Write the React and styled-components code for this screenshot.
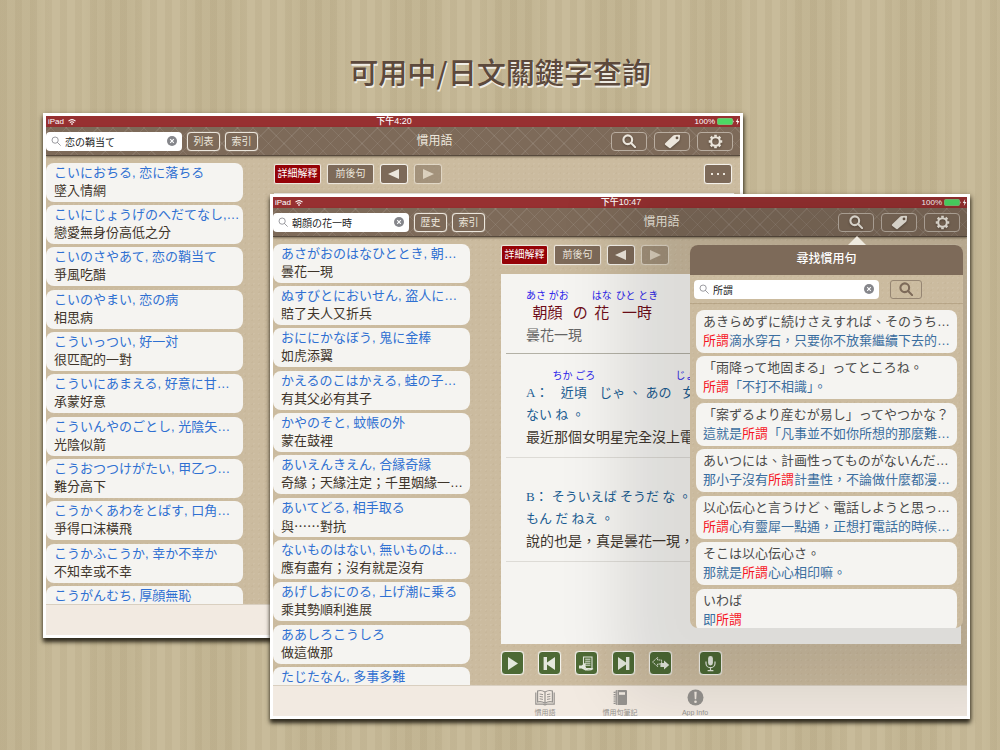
import React, { useState } from 'react';
import styled, { createGlobalStyle, css } from 'styled-components';

const brown = '#7d6a59';
const cream = '#ece6dc';
const paper = '#f5f4f1';
const green = '#4d6a35';

const cjk = `'Liberation Sans', 'Noto Sans CJK TC', 'Noto Sans CJK JP', sans-serif`;
const fullWidth = `'Noto Sans CJK TC', 'Noto Sans CJK JP', sans-serif`;
const serif = `'Liberation Serif', 'Noto Sans CJK TC', serif`;

const koiList = [
	{ ja: 'こいにおちる, 恋に落ちる', zh: '墜入情網' },
	{ ja: 'こいにじょうげのへだてなし,…', zh: '戀愛無身份高低之分' },
	{ ja: 'こいのさやあて, 恋の鞘当て', zh: '爭風吃醋' },
	{ ja: 'こいのやまい, 恋の病', zh: '相思病' },
	{ ja: 'こういっつい, 好一対', zh: '很匹配的一對' },
	{ ja: 'こういにあまえる, 好意に甘…', zh: '承蒙好意' },
	{ ja: 'こういんやのごとし, 光陰矢…', zh: '光陰似箭' },
	{ ja: 'こうおつつけがたい, 甲乙つ…', zh: '難分高下' },
	{ ja: 'こうかくあわをとばす, 口角…', zh: '爭得口沫橫飛' },
	{ ja: 'こうかふこうか, 幸か不幸か', zh: '不知幸或不幸' },
	{ ja: 'こうがんむち, 厚顔無恥', zh: '' }
];

const asagaoList = [
	{ ja: 'あさがおのはなひととき, 朝…', zh: '曇花一現' },
	{ ja: 'ぬすびとにおいせん, 盗人に…', zh: '賠了夫人又折兵' },
	{ ja: 'おににかなぼう, 鬼に金棒', zh: '如虎添翼' },
	{ ja: 'かえるのこはかえる, 蛙の子…', zh: '有其父必有其子' },
	{ ja: 'かやのそと, 蚊帳の外', zh: '蒙在鼓裡' },
	{ ja: 'あいえんきえん, 合縁奇縁', zh: '奇緣；天緣注定；千里姻緣一…' },
	{ ja: 'あいてどる, 相手取る', zh: '與……對抗', wide: true },
	{ ja: 'ないものはない, 無いものは…', zh: '應有盡有；沒有就是沒有' },
	{ ja: 'あげしおにのる, 上げ潮に乗る', zh: '乘其勢順利進展' },
	{ ja: 'ああしろこうしろ', zh: '做這做那' },
	{ ja: 'たじたなん, 多事多難', zh: '' }
];

const keyword = '所謂';

const results = [
	{ ja: 'あきらめずに続けさえすれば、そのうち…', zh: '所謂滴水穿石，只要你不放棄繼續下去的…' },
	{ ja: '「雨降って地固まる」ってところね。', zh: '所謂「不打不相識」。' },
	{ ja: '「案ずるより産むが易し」ってやつかな？', zh: '這就是所謂「凡事並不如你所想的那麼難…' },
	{ ja: 'あいつには、計画性ってものがないんだ…', zh: '那小子沒有所謂計畫性，不論做什麼都漫…' },
	{ ja: '以心伝心と言うけど、電話しようと思っ…', zh: '所謂心有靈犀一點通，正想打電話的時候…' },
	{ ja: 'そこは以心伝心さ。', zh: '那就是所謂心心相印嘛。' },
	{ ja: 'いわば', zh: '即所謂' }
];

const SearchIcon = ({ size = 14, weight = 2.4 }) => (
	<svg width={size} height={size} viewBox='0 0 16 16' fill='none' stroke='currentColor' strokeWidth={weight}>
		<circle cx='6.6' cy='6.6' r='5' />
		<path d='M10.4 10.4 15 15' strokeLinecap='round' />
	</svg>
);

const TagIcon = () => (
	<svg width='17' height='15' viewBox='0 0 17 15' fill='currentColor' fillRule='evenodd'>
		<path d='M1.2 9.2 9 1.8Q9.8 1.1 10.8 1L15 .7Q16.2.7 16.1 1.9L15.7 5.4Q15.6 6.3 14.9 7L6.6 13.9Q5.7 14.5 5 13.7L1.1 10.7Q.4 10 1.2 9.2ZM13 2.5a1.4 1.4 0 1 0 0 2.8 1.4 1.4 0 0 0 0-2.8Z' />
	</svg>
);

const GearIcon = () => (
	<svg width='15' height='15' viewBox='0 0 16 16' fill='none' stroke='currentColor'>
		<circle cx='8' cy='8' r='4.6' strokeWidth='2.2' />
		<path
			d='M8 .8V3M8 13v2.2M.8 8H3M13 8h2.2M2.9 2.9 4.5 4.5M11.5 11.5l1.6 1.6M13.1 2.9 11.5 4.5M4.5 11.5 2.9 13.1'
			strokeWidth='2.8'
		/>
	</svg>
);

const WifiIcon = () => (
	<svg width='8' height='6' viewBox='0 0 16 12' fill='none' stroke='currentColor' strokeWidth='2.2'>
		<path d='M1 4.2Q8-1.6 15 4.2M3.8 7.2Q8 3.8 12.2 7.2' />
		<path d='M8 8 10.2 9.8 8 12 5.8 9.8Z' fill='currentColor' stroke='none' />
	</svg>
);

const BatteryIcon = () => (
	<svg width='23' height='7' viewBox='0 0 23 7'>
		<rect x='.5' y='.5' width='15' height='6' rx='1' fill='#4cd964' stroke='#7fe08e' strokeWidth='.6' />
		<path d='M16.2 2.2Q17.4 3.5 16.2 4.8Z' fill='#fff' />
		<path d='M21.2 0 18.8 3.9H20.4L19.8 7 22.4 2.9H20.7Z' fill='#fff' />
	</svg>
);

const ClearIcon = () => (
	<svg width='10' height='10' viewBox='0 0 10 10'>
		<circle cx='5' cy='5' r='5' fill='#85868b' />
		<path d='M3.2 3.2 6.8 6.8M6.8 3.2 3.2 6.8' stroke='#fff' strokeWidth='1.1' />
	</svg>
);

const ArrowIcon = ({ flip }) => (
	<svg width='12' height='10' viewBox='0 0 12 10' fill='currentColor'>
		<path d={flip ? 'M1 0V10L12 5Z' : 'M11 0V10L0 5Z'} />
	</svg>
);

const PlayIcon = () => (
	<svg width='19' height='19' viewBox='0 0 19 19' fill='currentColor'>
		<path d='M5 3V16L15 9.5Z' />
	</svg>
);

const SkipIcon = ({ forward }) => (
	<svg width='19' height='19' viewBox='0 0 19 19' fill='currentColor'>
		{forward ? (
			<path d='M4 3V16L12 10.5V16H15.4V3H12V8.5Z' />
		) : (
			<path d='M15 3V16L7 10.5V16H3.6V3H7V8.5Z' />
		)}
	</svg>
);

const ReadIcon = () => (
	<svg width='19' height='19' viewBox='0 0 19 19'>
		<path d='M6.5 3H15V14.5H9L6.5 12Z' fill='none' stroke='currentColor' strokeWidth='1.1' />
		<path d='M8.2 5.2H13.4M8.2 7.2H13.4M8.2 9.2H13.4M8.2 11.2H13.4' stroke='currentColor' />
		<path d='M2 11.5H4.6L8.6 8.4V16.6L4.6 14.4H2Z' fill='currentColor' />
		<path d='M8 15.5Q13.5 16.8 16 14.5' fill='none' stroke='currentColor' strokeWidth='1.3' />
	</svg>
);

const SwapIcon = () => (
	<svg width='19' height='19' viewBox='0 0 19 19' strokeLinejoin='round'>
		<path d='M1.6 8 6.6 3.4V6H10.6V10H6.6V12.6Z' fill='none' stroke='currentColor' strokeDasharray='1.6 .5' />
		<path d='M18.2 11 13 6.4V9H9.4V13H13V15.6Z' fill='currentColor' />
	</svg>
);

const MicIcon = () => (
	<svg width='19' height='19' viewBox='0 0 19 19'>
		<rect x='7.1' y='2' width='4.8' height='9.4' rx='2.4' fill='currentColor' />
		<path
			d='M5 7.6V9.2A4.5 4.5 0 0 0 14 9.2V7.6M9.5 13.8V16.4M6.6 16.7H12.4'
			fill='none'
			stroke='currentColor'
			strokeWidth='1.2'
		/>
	</svg>
);

const BookIcon = () => (
	<svg width='20' height='17' viewBox='0 0 20 17' fill='none' stroke='currentColor' strokeWidth='1.2'>
		<path d='M10 3Q6 .6 2.6 2V13Q6.4 12 10 14.2 13.6 12 17.4 13V2Q14 .6 10 3ZM10 3V14.2' />
		<path d='M.8 3.4V15.2H8.4Q10 16.4 11.6 15.2H19.2V3.4' />
		<path d='M4.6 5 8 5.6M4.6 7.4 8 8M4.6 9.8 8 10.4M12 5.6 15.4 5M12 8 15.4 7.4M12 10.4 15.4 9.8' strokeWidth='1' />
	</svg>
);

const NotebookIcon = () => (
	<svg width='15' height='17' viewBox='0 0 15 17'>
		<rect x='2.6' y='1' width='11.4' height='15' rx='1' fill='currentColor' />
		<path d='M.6 3.4H2.6M.6 5.6H2.6M.6 7.8H2.6M.6 10H2.6M.6 12.2H2.6M.6 14.4H2.6' stroke='currentColor' strokeWidth='1.2' />
		<rect x='6' y='3.2' width='6' height='2.6' fill='#f2eae1' />
		<path d='M4.3 1V16' stroke='#f2eae1' strokeWidth='.6' />
	</svg>
);

const InfoIcon = () => (
	<svg width='17' height='17' viewBox='0 0 17 17'>
		<circle cx='8.5' cy='8.5' r='8' fill='currentColor' />
		<path d='M7.3 2.8H9.7L9.2 10.2H7.8Z' fill='#f2eae1' />
		<circle cx='8.5' cy='12.7' r='1.3' fill='#f2eae1' />
	</svg>
);

const SearchField = ({ label, initial }) => {
	const [ value, setValue ] = useState(initial);

	return (
		<FieldBox>
			<FieldIcon>
				<SearchIcon size={10} weight={1.4} />
			</FieldIcon>
			<input type='text' aria-label={label} value={value} onChange={e => setValue(e.target.value)} />
			<ClearBtn type='button' aria-label='清除' onClick={() => setValue('')}>
				<ClearIcon />
			</ClearBtn>
		</FieldBox>
	);
};

const StatusBar = ({ time }) => (
	<Status>
		<span>
			iPad <WifiIcon />
		</span>
		<strong>{time}</strong>
		<span>
			100% <BatteryIcon />
		</span>
	</Status>
);

const NavBar = ({ query, listLabel }) => (
	<Nav>
		<NavSearch>
			<SearchField label='搜尋' initial={query} />
		</NavSearch>
		<SmallBtn type='button'>{listLabel}</SmallBtn>
		<SmallBtn type='button'>索引</SmallBtn>
		<h2>慣用語</h2>
		<NavActions>
			<NavBtn type='button' aria-label='尋找'>
				<SearchIcon />
			</NavBtn>
			<NavBtn type='button' aria-label='標籤'>
				<TagIcon />
			</NavBtn>
			<NavBtn type='button' aria-label='設定'>
				<GearIcon />
			</NavBtn>
		</NavActions>
	</Nav>
);

const IdiomList = ({ items }) => (
	<List>
		{items.map(item => (
			<ListCard key={item.ja}>
				<Reading>{item.ja}</Reading>
				<Meaning $wide={item.wide}>{item.zh}</Meaning>
			</ListCard>
		))}
	</List>
);

const DetailToolbar = () => (
	<Toolbar>
		<ModeBtn type='button' $active>
			詳細解釋
		</ModeBtn>
		<ModeBtn type='button'>前後句</ModeBtn>
		<StepBtn type='button' aria-label='上一句'>
			<ArrowIcon />
		</StepBtn>
		<StepBtn type='button' aria-label='下一句' disabled>
			<ArrowIcon flip />
		</StepBtn>
		<MoreBtn type='button' aria-label='更多'>
			<i />
			<i />
			<i />
		</MoreBtn>
	</Toolbar>
);

const Furigana = ({ base, kana, align }) => (
	<Ruby $align={align}>
		<rt>{kana}</rt>
		<span>{base}</span>
	</Ruby>
);

const Highlight = ({ text }) => {
	const [ before, after ] = text.split(keyword);
	return (
		<>
			{before}
			<mark>{keyword}</mark>
			{after}
		</>
	);
};

const SearchPopover = () => (
	<Popover>
		<h3>尋找慣用句</h3>
		<PopoverSearch>
			<SearchField label='尋找慣用句' initial={keyword} />
			<PopoverBtn type='button' aria-label='開始尋找'>
				<SearchIcon />
			</PopoverBtn>
		</PopoverSearch>
		<ResultList>
			{results.map(result => (
				<ResultCard key={result.ja}>
					<p>{result.ja}</p>
					<p>
						<Highlight text={result.zh} />
					</p>
				</ResultCard>
			))}
		</ResultList>
	</Popover>
);

const App = () => (
	<Desktop>
		<GlobalStyle />
		<h1>可用中/日文關鍵字查詢</h1>

		<Window $left='4.3%' $top='113px'>
			<StatusBar time='下午4:20' />
			<NavBar query='恋の鞘当て' listLabel='列表' />
			<Body>
				<IdiomList items={koiList} />
				<Main>
					<DetailToolbar />
					<Panel />
				</Main>
			</Body>
			<TabBar />
		</Window>

		<Window $left='27%' $top='194px'>
			<StatusBar time='下午10:47' />
			<NavBar query='朝顔の花一時' listLabel='歴史' />
			<Body>
				<IdiomList items={asagaoList} />
				<Main>
					<DetailToolbar />
					<Panel>
						<HeadWord>
							<Furigana base='朝顔' kana='あさ がお' />
							<span>の</span>
							<Furigana base='花' kana='はな' />
							<Furigana base='一時' kana='ひと とき' />
						</HeadWord>
						<HeadMeaning>曇花一現</HeadMeaning>
						<Rule $strong />
						<Example>
							<ExampleLine>
								<span>A：</span>
								<Furigana base='近頃' kana='ちか ごろ' />
								<span>じゃ 、</span>
								<span>あの</span>
								<Furigana base='女' kana='じょ' align='flex-end' />
							</ExampleLine>
							<ExampleLine>
								<span>ない ね 。</span>
							</ExampleLine>
							<p>最近那個女明星完全沒上電</p>
						</Example>
						<Rule />
						<Example>
							<ExampleLine $tall>
								<span>B：</span>
								<span>そういえば そうだ な 。</span>
							</ExampleLine>
							<ExampleLine>
								<span>もん だ ねえ 。</span>
							</ExampleLine>
							<p>說的也是，真是曇花一現，</p>
						</Example>
						<Rule />
					</Panel>
					<Controls>
						<ControlBtn type='button' aria-label='播放'>
							<PlayIcon />
						</ControlBtn>
						<ControlBtn type='button' aria-label='上一個'>
							<SkipIcon />
						</ControlBtn>
						<ControlBtn type='button' aria-label='朗讀'>
							<ReadIcon />
						</ControlBtn>
						<ControlBtn type='button' aria-label='下一個'>
							<SkipIcon forward />
						</ControlBtn>
						<ControlBtn type='button' aria-label='切換'>
							<SwapIcon />
						</ControlBtn>
						<ControlBtn type='button' aria-label='錄音' $apart>
							<MicIcon />
						</ControlBtn>
					</Controls>
				</Main>
			</Body>
			<TabBar>
				<TabLink href='#idioms'>
					<BookIcon />
					慣用語
				</TabLink>
				<TabLink href='#notes'>
					<NotebookIcon />
					慣用句筆記
				</TabLink>
				<TabLink href='#info'>
					<InfoIcon />
					App Info
				</TabLink>
			</TabBar>
			<SearchPopover />
		</Window>
	</Desktop>
);

const GlobalStyle = createGlobalStyle`
	* {
		box-sizing: border-box;
	}

	body {
		margin: 0;
		font-family: ${cjk};
	}

	h1, h2, h3, p, ul {
		margin: 0;
		padding: 0;
	}

	ul {
		list-style: none;
	}

	button, input {
		font-family: inherit;
		padding: 0;
		margin: 0;
		border: 0;
	}

	button {
		cursor: pointer;
	}

	svg {
		display: block;
		flex-shrink: 0;
	}
`;

const kraft = css`
	background-color: #cbbb9f;
	background-image: radial-gradient(rgba(255, 255, 255, 0.06) 1px, transparent 1px),
		radial-gradient(rgba(110, 80, 40, 0.04) 1px, transparent 1px);
	background-size: 5px 5px, 7px 7px;
`;

const Desktop = styled.main`
	position: relative;
	min-height: 100vh;
	overflow: hidden;
	padding-top: 50px;
	background-color: #c7ba98;
	background-image: repeating-linear-gradient(90deg, rgba(120, 100, 60, 0.07) 0 7px, transparent 7px 15px),
		repeating-linear-gradient(90deg, rgba(110, 95, 60, 0.05) 0 30px, rgba(255, 255, 255, 0.02) 50px 80px, rgba(110, 95, 60, 0.05) 100px);

	& > h1 {
		font-family: ${fullWidth};
		font-size: 29px;
		line-height: 42px;
		font-weight: 500;
		text-align: center;
		color: #5c493c;
		text-shadow: 1px 2px 0 rgba(255, 255, 255, 0.75);
	}
`;

const Window = styled.section`
	position: absolute;
	left: ${props => props.$left};
	top: ${props => props.$top};
	width: 70%;
	aspect-ratio: 4 / 3;
	display: flex;
	flex-direction: column;
	overflow: hidden;
	border: 3px solid #fff;
	background-color: #fff;
	box-shadow: 0 4px 4px rgba(20, 18, 10, 0.75), 1px 2px 5px rgba(60, 50, 30, 0.6);
`;

const Status = styled.header`
	display: grid;
	grid-template-columns: 1fr auto 1fr;
	align-items: center;
	height: 11px;
	flex-shrink: 0;
	padding: 0 0 0 2px;
	background-color: #973031;
	color: #fff;
	font-size: 8px;
	line-height: 11px;

	strong {
		font-size: 9px;
		font-weight: 500;
	}

	span {
		display: flex;
		align-items: center;
		gap: 4px;
	}

	span:last-child {
		justify-content: flex-end;
		gap: 2px;
	}
`;

const Nav = styled.nav`
	display: flex;
	align-items: center;
	height: 29px;
	flex-shrink: 0;
	gap: 5px;
	padding-right: 7px;
	border-bottom: 1px solid #574a3d;
	background-color: ${brown};
	background-image: repeating-linear-gradient(45deg, rgba(255, 255, 255, 0.08) 0 1px, transparent 1px 11px),
		repeating-linear-gradient(-45deg, rgba(255, 255, 255, 0.08) 0 1px, transparent 1px 11px);
	box-shadow: 0 1px 2px rgba(70, 55, 40, 0.6);
	z-index: 1;

	h2 {
		flex: 1;
		text-align: center;
		color: ${cream};
		font-size: 12px;
		line-height: 18px;
		font-weight: 400;
	}
`;

const NavSearch = styled.div`
	width: 136px;
	flex-shrink: 0;
	display: flex;
`;

const FieldBox = styled.div`
	flex: 1;
	min-width: 0;
	display: flex;
	align-items: center;
	height: 19px;
	padding: 0 5px;
	border-radius: 4px;
	background-color: #fff;

	input {
		flex: 1;
		min-width: 0;
		height: 17px;
		padding-left: 4px;
		background: none;
		outline: none;
		color: #1c1c1c;
		font-size: 10px;
	}
`;

const FieldIcon = styled.span`
	color: #8e8e93;
`;

const ClearBtn = styled.button`
	background: none;
`;

const SmallBtn = styled.button`
	width: 33px;
	height: 19px;
	border: 1px solid ${cream};
	border-radius: 4px;
	background-color: ${brown};
	color: ${cream};
	font-size: 10px;
	line-height: 15px;
	box-shadow: 0 0 1px ${cream};
`;

const NavActions = styled.div`
	display: flex;
	gap: 7px;
`;

const NavBtn = styled.button`
	width: 36px;
	height: 19px;
	display: flex;
	justify-content: center;
	align-items: center;
	border: 1px solid #b9ada0;
	border-radius: 4px;
	background-color: ${brown};
	color: ${cream};

	svg {
		filter: drop-shadow(0 1px 1px rgba(50, 40, 30, 0.5));
	}
`;

const Body = styled.div`
	flex: 1;
	min-height: 0;
	display: flex;
	${kraft};
`;

const List = styled.ul`
	width: 198px;
	flex-shrink: 0;
	display: flex;
	flex-direction: column;
	gap: 3px;
	padding: 7px 1px 0 0;
	overflow: hidden;
`;

const ListCard = styled.li`
	flex-shrink: 0;
	height: 39px;
	padding: 1px 0 2px 8px;
	border-radius: 8px;
	background-color: ${paper};
	white-space: nowrap;
	overflow: hidden;
	font-size: 13px;
	line-height: 18px;

	&:nth-child(3n) {
		margin-bottom: 1px;
	}
`;

const Reading = styled.p`
	color: #2f70d2;
`;

const Meaning = styled.p`
	color: #3e342a;
	font-family: ${props => (props.$wide ? fullWidth : cjk)};
`;

const Main = styled.div`
	flex: 1;
	min-width: 0;
	display: flex;
	flex-direction: column;
	padding: 8px 6px 10px 30px;
`;

const Toolbar = styled.div`
	display: flex;
	gap: 6px;
	padding: 0 2px 0 0;
	margin-bottom: 9px;
`;

const ModeBtn = styled.button`
	width: 47px;
	height: 20px;
	border: 1px solid ${cream};
	border-radius: 2px;
	background-color: ${props => (props.$active ? '#950207' : brown)};
	color: ${props => (props.$active ? '#fff' : cream)};
	font-size: 10px;
	line-height: 16px;
	box-shadow: 0 0 1px ${cream};
`;

const StepBtn = styled.button`
	width: 28px;
	height: 20px;
	display: flex;
	justify-content: center;
	align-items: center;
	border: 1px solid #f5f1ea;
	border-radius: 3px;
	background-color: ${brown};
	color: ${cream};
	box-shadow: 0 0 1px ${cream};

	&:disabled {
		opacity: 0.5;
	}
`;

const MoreBtn = styled(StepBtn)`
	margin-left: auto;
	gap: 4px;

	i {
		width: 2px;
		height: 2px;
		background-color: ${cream};
	}
`;

const Panel = styled.article`
	flex: 1;
	min-height: 0;
	padding: 16px 0 0 5px;
	overflow: hidden;
	white-space: nowrap;
	background-color: ${paper};
`;

const Ruby = styled.ruby`
	display: inline-flex;
	flex-direction: column;
	align-items: ${props => props.$align || 'center'};

	rt {
		display: block;
		color: #2a22ea;
		font-family: ${cjk};
		font-size: 10px;
		line-height: 12px;
	}
`;

const HeadWord = styled.div`
	display: flex;
	align-items: flex-end;
	gap: 4px;
	padding-left: 20px;
	color: #6e0d18;
	font-size: 15px;
	line-height: 22px;
`;

const HeadMeaning = styled.p`
	padding-left: 20px;
	color: #666;
	font-size: 14px;
	line-height: 22px;
`;

const Rule = styled.hr`
	margin: ${props => (props.$strong ? '7px 0 0' : '9px 0 0')};
	border: 0;
	border-top: 1px ${props => (props.$strong ? 'solid #b3b1a6' : 'solid #dddbd6')};
`;

const Example = styled.div`
	padding: 16px 0 0 20px;
	color: #40372f;
	font-size: 14px;
	line-height: 22px;
`;

const ExampleLine = styled.div`
	display: flex;
	align-items: flex-end;
	gap: 4px;
	padding-top: ${props => (props.$tall ? '12px' : 0)};
	color: #1b5d92;
	font-family: ${serif};
	font-size: 13px;
`;

const Controls = styled.div`
	display: flex;
	gap: 14px;
	margin-top: 7px;
`;

const ControlBtn = styled.button`
	width: 23px;
	height: 24px;
	display: flex;
	justify-content: center;
	align-items: center;
	margin-left: ${props => (props.$apart ? '13px' : 0)};
	border: 1px solid #f3f1ea;
	border-radius: 4px;
	background-color: ${green};
	color: #e3e8dd;
	box-shadow: 0 0 1px #fff;
`;

const TabBar = styled.footer`
	height: 31px;
	flex-shrink: 0;
	display: flex;
	justify-content: center;
	border-top: 1px solid #d9cfc0;
	background-color: #f2eae1;
`;

const TabLink = styled.a`
	width: 75px;
	display: flex;
	flex-direction: column;
	align-items: center;
	padding-top: 3px;
	color: #96938f;
	font-size: 7px;
	line-height: 13px;
	text-decoration: none;
`;

const Popover = styled.aside`
	position: absolute;
	top: 48px;
	right: 4px;
	bottom: 88px;
	width: 273px;
	display: flex;
	flex-direction: column;
	border-radius: 8px;
	box-shadow: 0 0 65px 70px rgba(0, 0, 0, 0.1);
	z-index: 2;
	${kraft};

	&::before {
		content: '';
		position: absolute;
		right: 97px;
		bottom: 100%;
		border: 9px solid transparent;
		border-top-width: 0;
		border-bottom-color: #efeadf;
	}

	h3 {
		height: 30px;
		border-radius: 8px 8px 0 0;
		background-color: ${brown};
		color: #fff;
		text-align: center;
		font-size: 12px;
		font-weight: 500;
		line-height: 29px;
	}
`;

const PopoverSearch = styled.div`
	display: flex;
	align-items: center;
	gap: 11px;
	height: 29px;
	padding: 0 41px 0 4px;
	border-bottom: 1px solid rgba(140, 115, 80, 0.3);
`;

const PopoverBtn = styled.button`
	width: 32px;
	height: 19px;
	display: flex;
	justify-content: center;
	align-items: center;
	border: 1px solid #968673;
	border-radius: 3px;
	background: none;
	color: ${brown};
`;

const ResultList = styled.ul`
	flex: 1;
	min-height: 0;
	display: flex;
	flex-direction: column;
	gap: 3px;
	padding: 6px 6px 0;
	border-radius: 0 0 8px 8px;
	overflow: hidden;
`;

const ResultCard = styled.li`
	flex-shrink: 0;
	height: 43px;
	padding: 2px 0 0 7px;
	border-radius: 8px;
	background-color: ${paper};
	color: #4b4b4b;
	font-size: 13px;
	line-height: 19px;
	white-space: nowrap;
	overflow: hidden;

	&:nth-child(2n) {
		margin-bottom: 1px;
	}

	p + p {
		color: #3b6e9f;
	}

	mark {
		background: none;
		color: #f6141f;
	}
`;

export default App;
